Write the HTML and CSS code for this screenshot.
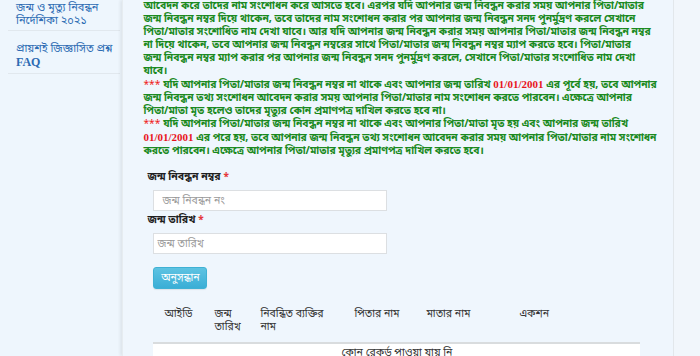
FILE: index.html
```html
<!DOCTYPE html>
<html lang="bn">
<head>
<meta charset="utf-8">
<title>জন্ম নিবন্ধন তথ্য সংশোধন</title>
<link rel="stylesheet" href="styles.css">
</head>
<body>
<div class="layout">
  <aside class="sidebar">
    <a class="side-item first" href="#">জন্ম ও মৃত্যু নিবন্ধন<br>নির্দেশিকা ২০২১</a>
    <a class="side-item" href="#">প্রায়শই জিজ্ঞাসিত প্রশ্ন<br><b class="faq">FAQ</b></a>
  </aside>
  <main class="main">
    <p class="notice">আবেদন করে তাদের নাম সংশোধন করে আসতে হবে। এরপর যদি আপনার জন্ম নিবন্ধন করার সময় আপনার পিতা/মাতার<br>জন্ম নিবন্ধন নম্বর দিয়ে থাকেন, তবে তাদের নাম সংশোধন করার পর আপনার জন্ম নিবন্ধন সনদ পুনর্মুদ্রণ করলে সেখানে<br>পিতা/মাতার সংশোধিত নাম দেখা যাবে। আর যদি আপনার জন্ম নিবন্ধন করার সময় আপনার পিতা/মাতার জন্ম নিবন্ধন নম্বর<br>না দিয়ে থাকেন, তবে আপনার জন্ম নিবন্ধন নম্বরের সাথে পিতা/মাতার জন্ম নিবন্ধন নম্বর ম্যাপ করতে হবে। পিতা/মাতার<br>জন্ম নিবন্ধন নম্বর ম্যাপ করার পর আপনার জন্ম নিবন্ধন সনদ পুনর্মুদ্রণ করলে, সেখানে পিতা/মাতার সংশোধিত নাম দেখা<br>যাবে।<br><span class="stars">***</span> যদি আপনার পিতা/মাতার জন্ম নিবন্ধন নম্বর না থাকে এবং আপনার জন্ম তারিখ <span class="date">01/01/2001</span> এর পূর্বে হয়, তবে আপনার<br>জন্ম নিবন্ধন তথ্য সংশোধন আবেদন করার সময় আপনার পিতা/মাতার নাম সংশোধন করতে পারবেন। এক্ষেত্রে আপনার<br>পিতা/মাতা মৃত হলেও তাদের মৃত্যুর কোন প্রমাণপত্র দাখিল করতে হবে না।<br><span class="stars">***</span> যদি আপনার পিতা/মাতার জন্ম নিবন্ধন নম্বর না থাকে এবং আপনার পিতা/মাতা মৃত হয় এবং আপনার জন্ম তারিখ<br><span class="date">01/01/2001</span> এর পরে হয়, তবে আপনার জন্ম নিবন্ধন তথ্য সংশোধন আবেদন করার সময় আপনার পিতা/মাতার নাম সংশোধন<br>করতে পারবেন। এক্ষেত্রে আপনার পিতা/মাতার মৃত্যুর প্রমাণপত্র দাখিল করতে হবে।</p>

    <form class="form">
      <label class="label">জন্ম নিবন্ধন নম্বর <span class="req">*</span></label>
      <input class="input" type="text" placeholder="জন্ম নিবন্ধন নং">
      <label class="label">জন্ম তারিখ <span class="req">*</span></label>
      <input class="input input-date" type="text" placeholder="জন্ম তারিখ">
      <button class="btn" type="button">অনুসন্ধান</button>
    </form>

    <table class="table">
      <colgroup>
        <col class="c1"><col class="c2"><col class="c3"><col class="c4"><col class="c5"><col class="c6">
      </colgroup>
      <thead>
        <tr>
          <th class="th-first">আইডি</th>
          <th>জন্ম<br>তারিখ</th>
          <th>নিবন্ধিত ব্যক্তির<br>নাম</th>
          <th>পিতার নাম</th>
          <th>মাতার নাম</th>
          <th>একশন</th>
        </tr>
      </thead>
      <tbody>
        <tr><td class="empty" colspan="6">কোন রেকর্ড পাওয়া যায় নি</td></tr>
      </tbody>
    </table>
  </main>
  <div class="gutter"></div>
</div>
</body>
</html>
```

FILE: styles.css
```css
* { box-sizing: border-box; }
html, body { margin: 0; padding: 0; }
body {
  background: #eef6fd;
  font-family: "Noto Sans Bengali", "Noto Sans", "DejaVu Sans", sans-serif;
  font-size: 12px;
  color: #333;
  overflow: hidden;
  height: 356px;
}
.layout {
  display: flex;
  height: 356px;
}
.sidebar {
  flex: 0 0 120px;
  padding: 0 2px 0 8px;
  display: flex;
  flex-direction: column;
}
.side-item {
  display: block;
  color: #2c6bb3;
  text-decoration: none;
  font-size: 11px;
  line-height: 13px;
  white-space: nowrap;
  padding: 12px 8px 3px;
  border-bottom: 1px solid #e1e8ee;
}
.side-item.first { padding-top: 2px; padding-bottom: 2px; }
.faq {
  font-family: "Liberation Serif", serif;
  font-weight: bold;
  font-size: 12px;
}
.main {
  flex: 0 0 552px;
  padding: 0 0 0 20px;
  background: #eff6fd;
  box-shadow: -2px 0 3px rgba(0,0,0,0.07);
  border-left: 1px solid #e6ecf0;
  border-right: 1px solid #e2e7eb;
  overflow: hidden;
}
.gutter {
  flex: 1;
  background: #f1f6fb;
}
.notice {
  margin: 0 0 13px;
  color: #1b8a1f;
  font-weight: bold;
  line-height: 13px;
  white-space: nowrap;
  font-size: 10.3px;
}
.stars { color: #f01c1c; font-weight: normal; }
.date {
  color: #e8141c;
  font-family: "Liberation Serif", serif;
  font-weight: bold;
  font-size: 11px;
}
.form {
  display: flex;
  flex-direction: column;
  align-items: flex-start;
  padding-left: 4px;
}
.label {
  display: block;
  font-weight: bold;
  color: #1f1f1f;
  font-size: 10.5px;
  line-height: 13px;
  margin-bottom: 6px;
}
.req { color: #e5383b; font-size: 10px; }
.input {
  width: 234px;
  height: 21px;
  margin: 0 0 3px 6px;
  border: 1px solid #dcdfe2;
  background: #fff;
  font-family: inherit;
  font-size: 10.5px;
  padding: 0 8px;
  color: #555;
}
.input::placeholder { color: #9a9a9a; }
.input-date { padding-left: 3px; margin-bottom: 0; }
.form .input + .label { margin-bottom: 6px; }
.btn {
  margin: 13px 0 0 6px;
  width: 54px;
  height: 22px;
  border: 1px solid #3fb1d4;
  border-radius: 3px;
  background: linear-gradient(#5ec3e2, #3aaed6);
  color: #fff;
  font-family: inherit;
  font-size: 10.5px;
  padding: 0;
  box-shadow: 0 1px 1px rgba(0,0,0,0.08);
}
.table {
  margin: 11px 0 0 10px;
  width: 487px;
  border-collapse: collapse;
  table-layout: fixed;
}
.c1 { width: 53px; }
.c2 { width: 46px; }
.c3 { width: 94px; }
.c4 { width: 72px; }
.c5 { width: 93px; }
.c6 { width: 129px; }
.table th {
  text-align: left;
  font-weight: normal;
  color: #333;
  line-height: 13px;
  padding: 8px;
  vertical-align: top;
  border-bottom: 2px solid #d9dcde;
  font-size: 10.5px;
}
.table .th-first { padding-left: 11px; }
.table td {
  background: #fff;
  text-align: center;
  padding: 3px 8px 8px;
  line-height: 13px;
  font-size: 10.5px;
  color: #333;
}
```
